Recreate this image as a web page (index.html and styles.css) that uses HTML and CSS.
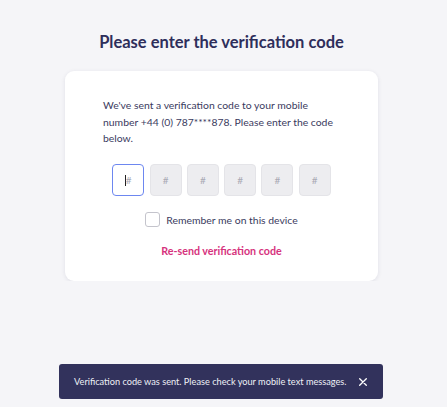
FILE: index.html
```html
<!DOCTYPE html>
<html lang="en">
<head>
<meta charset="utf-8">
<link rel="stylesheet" href="styles.css">
</head>
<body>
<main class="page">
  <h1 class="title">Please enter the verification code</h1>
  <section class="card">
    <p class="intro">We've sent a verification code to your mobile number +44 (0) 787****878. Please enter the code below.</p>
    <div class="code">
      <div class="digit active"><span class="caret"></span><span class="ph">#</span></div>
      <div class="digit"><span class="ph">#</span></div>
      <div class="digit"><span class="ph">#</span></div>
      <div class="digit"><span class="ph">#</span></div>
      <div class="digit"><span class="ph">#</span></div>
      <div class="digit"><span class="ph">#</span></div>
    </div>
    <label class="remember"><span class="box"></span><span>Remember me on this device</span></label>
    <a class="resend" href="#">Re-send verification code</a>
  </section>
</main>
<div class="toast">
  <span class="toast-text">Verification code was sent. Please check your mobile text messages.</span>
  <svg class="close" width="8" height="8" viewBox="0 0 8 8"><path d="M0.7 0.7L7.3 7.3M7.3 0.7L0.7 7.3" stroke="#fff" stroke-width="1.3" stroke-linecap="round"/></svg>
</div>
</body>
</html>
```

FILE: styles.css
```css
html, body {
  margin: 0;
  padding: 0;
  background: #f5f5f8;
  font-family: Lato, "Noto Sans", sans-serif;
  color: #33335a;
}
.page {
  display: flex;
  flex-direction: column;
  align-items: center;
  padding-top: 32px;
  padding-right: 4px;
}
.title {
  margin: 0 0 19px;
  font-size: 16.5px;
  line-height: 20px;
  font-weight: 700;
  color: #2e2e5b;
}
.card {
  box-sizing: border-box;
  width: 313px;
  height: 210px;
  background: #fff;
  border-radius: 9px;
  box-shadow: 0 1px 4px rgba(40, 40, 80, 0.10);
  padding: 26px 38px 0;
  display: flex;
  flex-direction: column;
  align-items: center;
}
.intro {
  margin: 0;
  align-self: stretch;
  font-size: 10.4px;
  line-height: 16.7px;
  color: #3a3a5e;
}
.code {
  display: flex;
  gap: 5.3px;
  margin-top: 17px;
}
.digit {
  box-sizing: border-box;
  width: 32px;
  height: 32px;
  border-radius: 4px;
  background: #ededf0;
  border: 1px solid #e4e4e8;
  display: flex;
  align-items: center;
  justify-content: center;
}
.digit.active {
  background: #fff;
  border: 1px solid #6d87f0;
}
.ph {
  font-size: 10px;
  color: #a9a9b4;
}
.caret {
  width: 1px;
  height: 11px;
  background: #222;
}
.remember {
  display: flex;
  align-items: center;
  gap: 6px;
  margin-top: 16px;
  font-size: 10.4px;
  color: #3a3a5e;
}
.box {
  box-sizing: border-box;
  width: 15px;
  height: 15px;
  border: 1px solid #c4c4cc;
  border-radius: 3px;
  background: #fff;
}
.resend {
  margin-top: 17px;
  font-size: 10.7px;
  font-weight: 700;
  color: #d6327d;
  text-decoration: none;
}
.toast {
  position: fixed;
  left: 59px;
  bottom: 8px;
  box-sizing: border-box;
  width: 324px;
  height: 35px;
  background: #32325c;
  border-radius: 3px;
  display: flex;
  align-items: center;
  justify-content: space-between;
  padding: 0 16px 0 15px;
}
.toast-text {
  color: #eef0f6;
  font-size: 9.2px;
  white-space: nowrap;
}
.close {
  display: block;
  flex: none;
}
```
